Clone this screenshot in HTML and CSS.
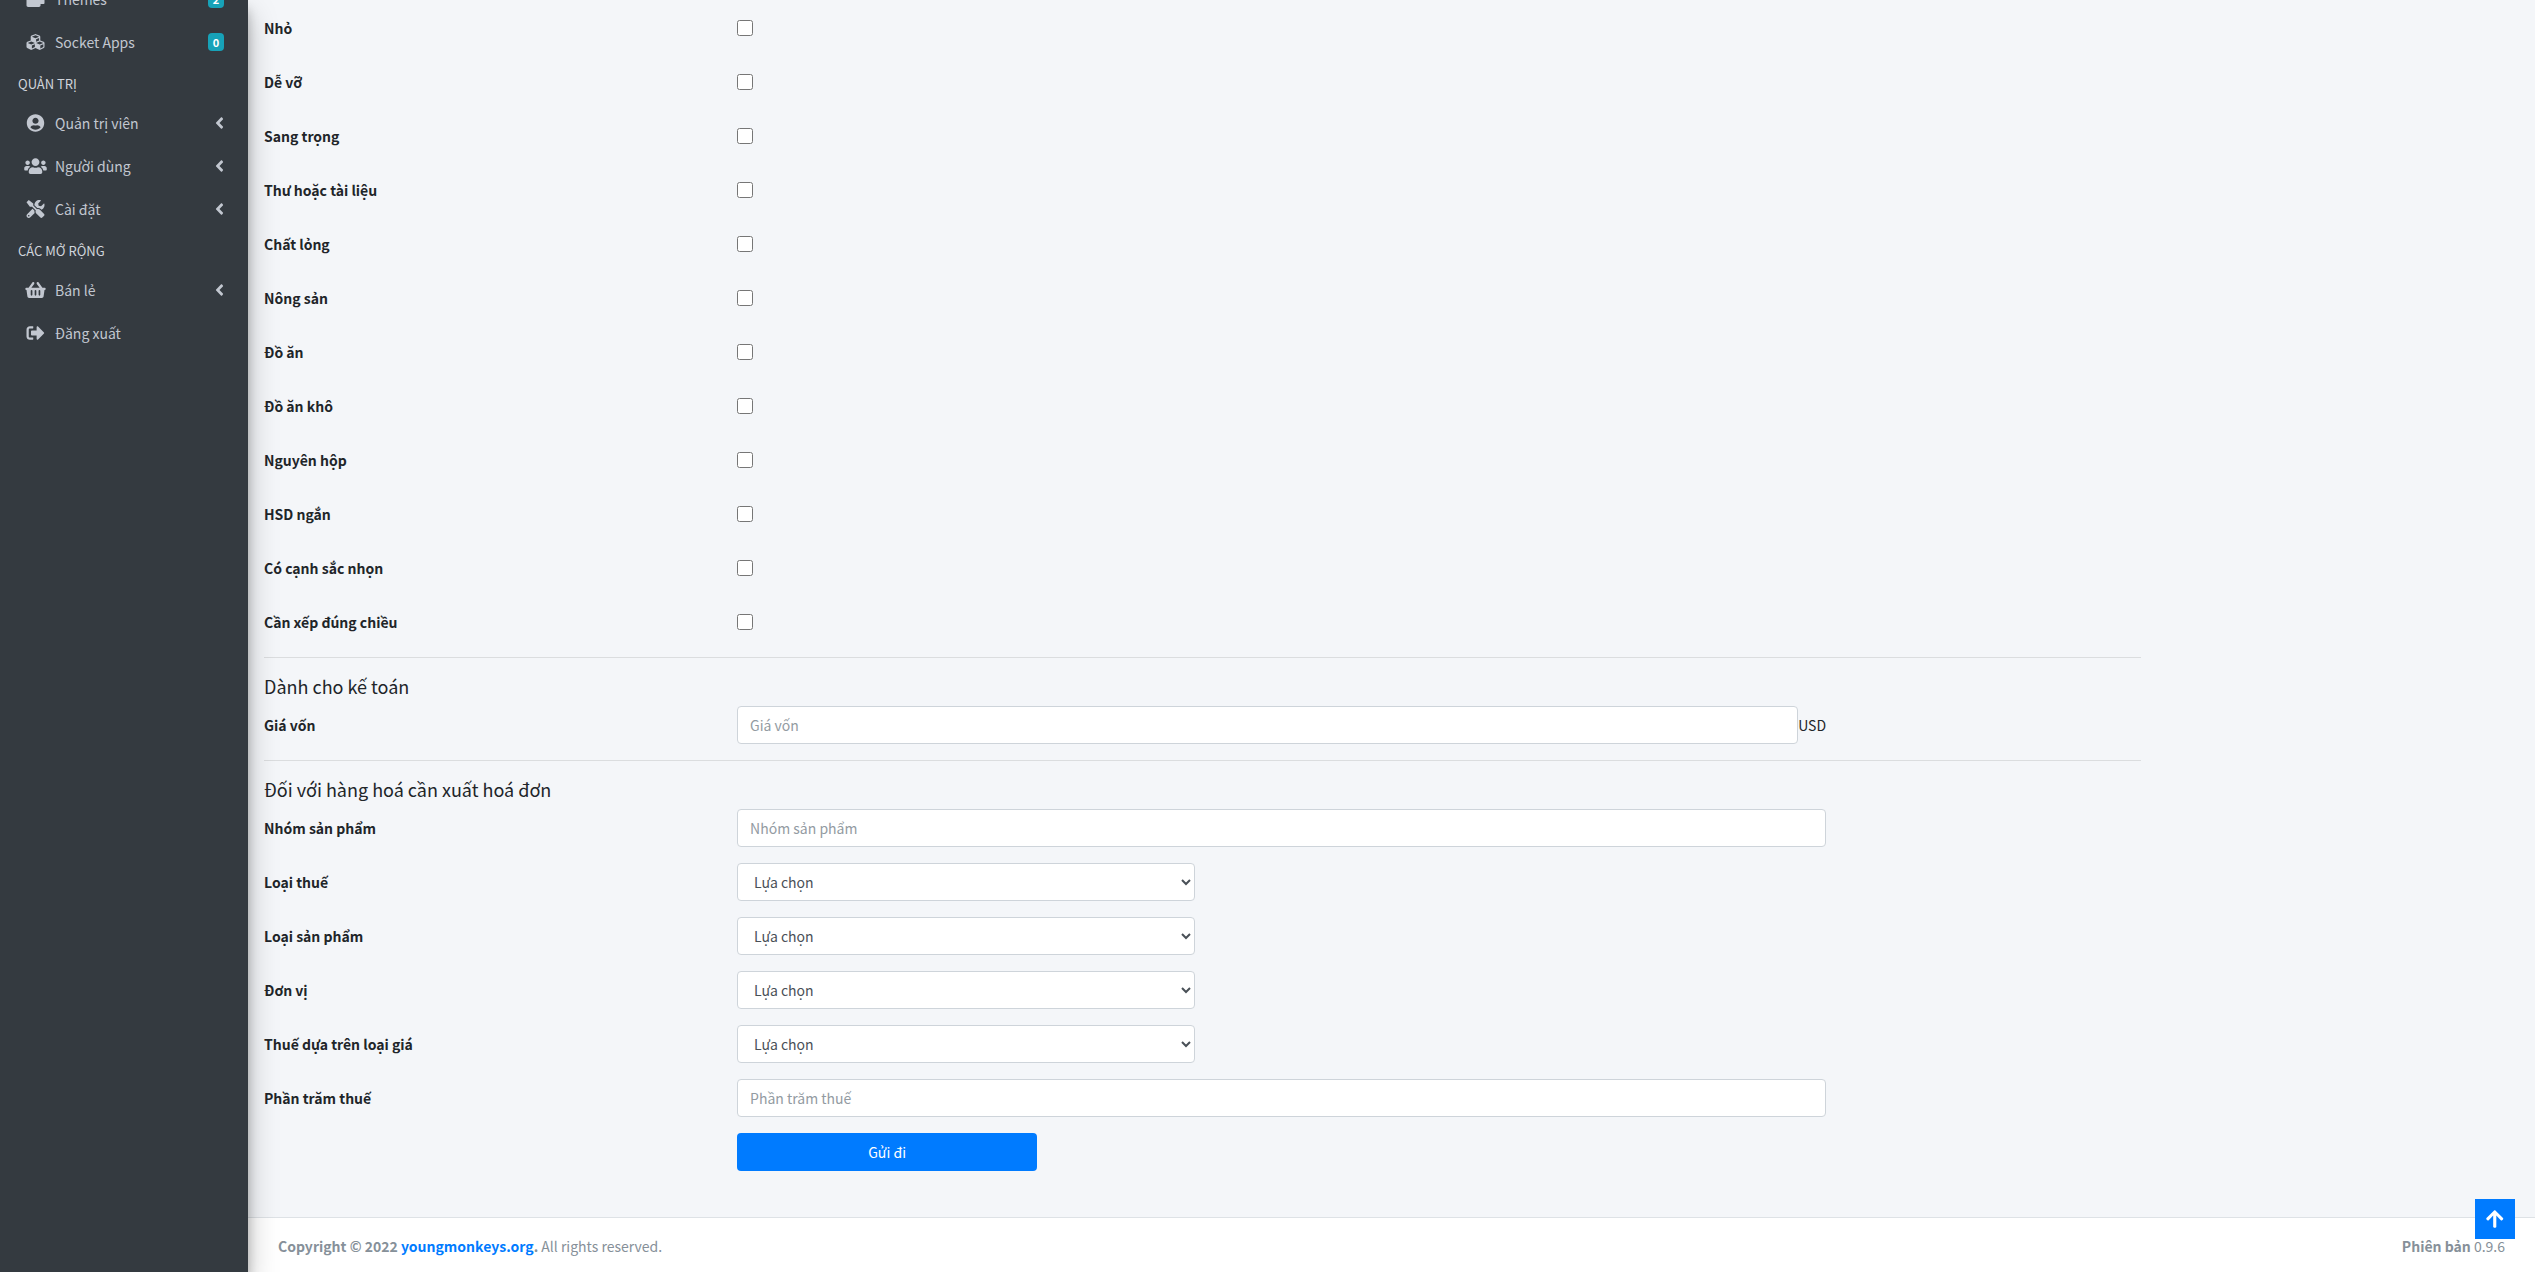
FILE: index.html
```
<!DOCTYPE html>
<html lang="vi">
<head>
    <meta charset="UTF-8">
    <meta name="viewport" content="width=device-width, initial-scale=1.0">
    <title>Quản trị</title>
    <link rel="stylesheet" href="styles.css">
</head>
<body>
<div class="wrapper">
    <!-- Sidebar -->
    <aside class="main-sidebar">
        <nav class="sidebar-nav">
            <a href="#" class="nav-link">
                <svg class="nav-icon" viewBox="0 0 512 512"><path d="M0 96c0-26 21-48 48-48h352v64h112v256c0 18-14 32-32 32h-80v32c0 26-21 48-48 48H48c-27 0-48-22-48-48z"/></svg>
                <span class="nav-text">Themes</span>
                <span class="badge">2</span>
            </a>
            <a href="#" class="nav-link">
                <svg class="nav-icon" viewBox="0 0 512 512"><path d="M488.6 250.2L392 214V105.5c0-15-9.3-28.4-23.4-33.7l-100-37.5c-8.1-3.1-17.1-3.1-25.3 0l-100 37.5c-14.1 5.3-23.4 18.7-23.4 33.7V214l-96.6 36.2C9.3 255.5 0 268.9 0 283.9V394c0 13.6 7.7 26.1 19.9 32.2l100 50c10.1 5.1 22.1 5.1 32.2 0l103.9-52 103.9 52c10.1 5.1 22.1 5.1 32.2 0l100-50c12.2-6.1 19.9-18.6 19.9-32.2V283.9c0-15-9.3-28.4-23.4-33.7zM358 214.8l-85 31.9v-68.2l85-37v73.3zM154 104.1l102-38.2 102 38.2v.6l-102 41.4-102-41.4v-.6zm84 291.1l-85 42.5v-79.1l85-38.8v75.4zm0-112l-102 41.4-102-41.4v-.6l102-38.2 102 38.2v.6zm240 112l-85 42.5v-79.1l85-38.8v75.4zm0-112l-102 41.4-102-41.4v-.6l102-38.2 102 38.2v.6z"/></svg>
                <span class="nav-text">Socket Apps</span>
                <span class="badge">0</span>
            </a>
            <div class="nav-header">QUẢN TRỊ</div>
            <a href="#" class="nav-link">
                <svg class="nav-icon" viewBox="0 0 496 512"><path d="M248 8C111 8 0 119 0 256s111 248 248 248 248-111 248-248S385 8 248 8zm0 96c48.6 0 88 39.4 88 88s-39.4 88-88 88-88-39.4-88-88 39.4-88 88-88zm0 344c-58.7 0-111.3-26.6-146.5-68.2 18.8-35.4 55.6-59.8 98.5-59.8 2.4 0 4.8.4 7.1 1.1 13 4.2 26.6 6.9 40.9 6.9 14.3 0 28-2.7 40.9-6.9 2.3-.7 4.7-1.1 7.1-1.1 42.9 0 79.7 24.4 98.5 59.8C359.3 421.4 306.7 448 248 448z"/></svg>
                <span class="nav-text">Quản trị viên</span>
                <svg class="nav-arrow" viewBox="0 0 256 512"><path d="M31.7 239l136-136c9.4-9.4 24.6-9.4 33.9 0l22.6 22.6c9.4 9.4 9.4 24.6 0 33.9L127.9 256l96.4 96.4c9.4 9.4 9.4 24.6 0 33.9L201.7 409c-9.4 9.4-24.6 9.4-33.9 0l-136-136c-9.5-9.4-9.5-24.6-.1-34z"/></svg>
            </a>
            <a href="#" class="nav-link">
                <svg class="nav-icon" viewBox="0 0 640 512"><path d="M96 224c35.3 0 64-28.7 64-64s-28.7-64-64-64-64 28.7-64 64 28.7 64 64 64zm448 0c35.3 0 64-28.7 64-64s-28.7-64-64-64-64 28.7-64 64 28.7 64 64 64zm32 32h-64c-17.6 0-33.5 7.1-45.1 18.6 40.3 22.1 68.9 62 75.1 109.4h66c17.7 0 32-14.3 32-32v-32c0-35.3-28.7-64-64-64zm-256 0c61.9 0 112-50.1 112-112S381.9 32 320 32 208 82.1 208 144s50.1 112 112 112zm76.8 32h-8.3c-20.8 10-43.9 16-68.5 16s-47.6-6-68.5-16h-8.3C179.6 288 128 339.6 128 403.2V432c0 26.5 21.5 48 48 48h288c26.5 0 48-21.5 48-48v-28.8c0-63.6-51.6-115.2-115.2-115.2zm-223.7-13.4C161.5 263.1 145.6 256 128 256H64c-35.3 0-64 28.7-64 64v32c0 17.7 14.3 32 32 32h65.9c6.3-47.4 34.9-87.3 75.2-109.4z"/></svg>
                <span class="nav-text">Người dùng</span>
                <svg class="nav-arrow" viewBox="0 0 256 512"><path d="M31.7 239l136-136c9.4-9.4 24.6-9.4 33.9 0l22.6 22.6c9.4 9.4 9.4 24.6 0 33.9L127.9 256l96.4 96.4c9.4 9.4 9.4 24.6 0 33.9L201.7 409c-9.4 9.4-24.6 9.4-33.9 0l-136-136c-9.5-9.4-9.5-24.6-.1-34z"/></svg>
            </a>
            <a href="#" class="nav-link">
                <svg class="nav-icon" viewBox="0 0 512 512"><path d="M501.1 395.7L384 278.6c-23.1-23.1-57.6-27.6-85.4-13.9L192 158.1V96L64 0 0 64l96 128h62.1l106.6 106.6c-13.6 27.8-9.2 62.3 13.9 85.4l117.1 117.1c14.6 14.6 38.2 14.6 52.7 0l52.7-52.7c14.5-14.6 14.5-38.2 0-52.7zM331.7 225c28.3 0 54.9 11 74.9 31l19.4 19.4c15.8-6.9 30.8-16.5 43.8-29.5 37.1-37.1 49.7-89.3 37.9-136.7-2.2-9-13.5-12.1-20.1-5.5l-74.4 74.4-67.9-11.3L334 98.9l74.4-74.4c6.6-6.6 3.4-17.9-5.7-20.2-47.4-11.7-99.6.9-136.6 37.9-28.5 28.5-41.9 66.1-41.2 103.6l82.1 82.1c8.1-1.9 16.5-2.9 24.7-2.9zm-103.9 82l-56.7-56.7L18.7 402.8c-25 25-25 65.5 0 90.5s65.5 25 90.5 0l123.6-123.6c-7.6-19.9-9.9-41.6-5-62.7zM64 472c-13.2 0-24-10.8-24-24 0-13.3 10.7-24 24-24s24 10.7 24 24c0 13.2-10.7 24-24 24z"/></svg>
                <span class="nav-text">Cài đặt</span>
                <svg class="nav-arrow" viewBox="0 0 256 512"><path d="M31.7 239l136-136c9.4-9.4 24.6-9.4 33.9 0l22.6 22.6c9.4 9.4 9.4 24.6 0 33.9L127.9 256l96.4 96.4c9.4 9.4 9.4 24.6 0 33.9L201.7 409c-9.4 9.4-24.6 9.4-33.9 0l-136-136c-9.5-9.4-9.5-24.6-.1-34z"/></svg>
            </a>
            <div class="nav-header">CÁC MỞ RỘNG</div>
            <a href="#" class="nav-link">
                <svg class="nav-icon" viewBox="0 0 576 512"><path d="M576 216v16c0 13.255-10.745 24-24 24h-8l-26.113 182.788C514.509 462.435 494.257 480 470.37 480H105.63c-23.887 0-44.139-17.565-47.518-41.212L32 256h-8c-13.255 0-24-10.745-24-24v-16c0-13.255 10.745-24 24-24h67.341l106.78-146.821c10.395-14.292 30.407-17.453 44.701-7.058 14.293 10.395 17.453 30.408 7.058 44.701L170.477 192h235.046L326.12 82.821c-10.395-14.292-7.234-34.306 7.059-44.701 14.291-10.395 34.306-7.235 44.701 7.058L484.659 192H552c13.255 0 24 10.745 24 24zM312 392V280c0-13.255-10.745-24-24-24s-24 10.745-24 24v112c0 13.255 10.745 24 24 24s24-10.745 24-24zm112 0V280c0-13.255-10.745-24-24-24s-24 10.745-24 24v112c0 13.255 10.745 24 24 24s24-10.745 24-24zm-224 0V280c0-13.255-10.745-24-24-24s-24 10.745-24 24v112c0 13.255 10.745 24 24 24s24-10.745 24-24z"/></svg>
                <span class="nav-text">Bán lẻ</span>
                <svg class="nav-arrow" viewBox="0 0 256 512"><path d="M31.7 239l136-136c9.4-9.4 24.6-9.4 33.9 0l22.6 22.6c9.4 9.4 9.4 24.6 0 33.9L127.9 256l96.4 96.4c9.4 9.4 9.4 24.6 0 33.9L201.7 409c-9.4 9.4-24.6 9.4-33.9 0l-136-136c-9.5-9.4-9.5-24.6-.1-34z"/></svg>
            </a>
            <a href="#" class="nav-link">
                <svg class="nav-icon" viewBox="0 0 512 512"><path d="M497 273L329 441c-15 15-41 4.5-41-17v-96H152c-13.3 0-24-10.7-24-24v-96c0-13.3 10.7-24 24-24h136V88c0-21.4 25.9-32 41-17l168 168c9.3 9.4 9.3 24.6 0 34zM192 436v-40c0-6.6-5.4-12-12-12H96c-17.7 0-32-14.3-32-32V160c0-17.7 14.3-32 32-32h84c6.6 0 12-5.4 12-12V76c0-6.6-5.4-12-12-12H96c-53 0-96 43-96 96v192c0 53 43 96 96 96h84c6.6 0 12-5.4 12-12z"/></svg>
                <span class="nav-text">Đăng xuất</span>
            </a>
        </nav>
    </aside>

    <div class="content-wrapper">
        <main class="content">
            <form class="product-form">
                <div class="form-group">
                    <label for="small">Nhỏ</label>
                    <input type="checkbox" id="small">
                </div>
                <div class="form-group">
                    <label for="fragile">Dễ vỡ</label>
                    <input type="checkbox" id="fragile">
                </div>
                <div class="form-group">
                    <label for="luxury">Sang trọng</label>
                    <input type="checkbox" id="luxury">
                </div>
                <div class="form-group">
                    <label for="document">Thư hoặc tài liệu</label>
                    <input type="checkbox" id="document">
                </div>
                <div class="form-group">
                    <label for="liquid">Chất lỏng</label>
                    <input type="checkbox" id="liquid">
                </div>
                <div class="form-group">
                    <label for="agricultural">Nông sản</label>
                    <input type="checkbox" id="agricultural">
                </div>
                <div class="form-group">
                    <label for="food">Đồ ăn</label>
                    <input type="checkbox" id="food">
                </div>
                <div class="form-group">
                    <label for="dryFood">Đồ ăn khô</label>
                    <input type="checkbox" id="dryFood">
                </div>
                <div class="form-group">
                    <label for="wholeBox">Nguyên hộp</label>
                    <input type="checkbox" id="wholeBox">
                </div>
                <div class="form-group">
                    <label for="shortExpiry">HSD ngắn</label>
                    <input type="checkbox" id="shortExpiry">
                </div>
                <div class="form-group">
                    <label for="sharpEdges">Có cạnh sắc nhọn</label>
                    <input type="checkbox" id="sharpEdges">
                </div>
                <div class="form-group">
                    <label for="upright">Cần xếp đúng chiều</label>
                    <input type="checkbox" id="upright">
                </div>

                <hr>
                <h5>Dành cho kế toán</h5>
                <div class="form-group">
                    <label for="costPrice">Giá vốn</label>
                    <div class="field field-unit">
                        <input type="text" class="form-control" id="costPrice" placeholder="Giá vốn">
                        <span>USD</span>
                    </div>
                </div>

                <hr>
                <h5>Đối với hàng hoá cần xuất hoá đơn</h5>
                <div class="form-group">
                    <label for="productGroup">Nhóm sản phẩm</label>
                    <div class="field">
                        <input type="text" class="form-control" id="productGroup" placeholder="Nhóm sản phẩm">
                    </div>
                </div>
                <div class="form-group">
                    <label for="taxType">Loại thuế</label>
                    <div class="field field-small">
                        <select class="form-control" id="taxType"><option>Lựa chọn</option></select>
                    </div>
                </div>
                <div class="form-group">
                    <label for="productType">Loại sản phẩm</label>
                    <div class="field field-small">
                        <select class="form-control" id="productType"><option>Lựa chọn</option></select>
                    </div>
                </div>
                <div class="form-group">
                    <label for="unit">Đơn vị</label>
                    <div class="field field-small">
                        <select class="form-control" id="unit"><option>Lựa chọn</option></select>
                    </div>
                </div>
                <div class="form-group">
                    <label for="taxBase">Thuế dựa trên loại giá</label>
                    <div class="field field-small">
                        <select class="form-control" id="taxBase"><option>Lựa chọn</option></select>
                    </div>
                </div>
                <div class="form-group">
                    <label for="taxPercent">Phần trăm thuế</label>
                    <div class="field">
                        <input type="text" class="form-control" id="taxPercent" placeholder="Phần trăm thuế">
                    </div>
                </div>
                <div class="form-group">
                    <button type="submit" class="btn-submit">Gửi đi</button>
                </div>
            </form>
        </main>

        <footer class="main-footer">
            <div><strong>Copyright © 2022 <a href="#">youngmonkeys.org</a>.</strong> All rights reserved.</div>
            <div><b>Phiên bản</b> 0.9.6</div>
        </footer>
    </div>
</div>

<button type="button" class="back-to-top" aria-label="Scroll to top">
    <svg viewBox="0 0 448 512"><path d="M34.9 289.5l-22.2-22.2c-9.4-9.4-9.4-24.6 0-33.9L207 39c9.4-9.4 24.6-9.4 33.9 0l194.3 194.3c9.4 9.4 9.4 24.6 0 33.9L413 289.4c-9.5 9.5-25 9.3-34.3-.4L264 168.6V456c0 13.3-10.7 24-24 24h-32c-13.3 0-24-10.7-24-24V168.6L69.2 289.1c-9.3 9.8-24.8 10-34.3.4z"/></svg>
</button>
</body>
</html>
```
FILE: styles.css
```
* {
    box-sizing: border-box;
}

body {
    margin: 0;
    font-family: "Noto Sans CJK SC", "Noto Sans", sans-serif;
    font-size: 14px;
    line-height: 24px;
    color: #212529;
    background: #f4f6f9;
}

a {
    color: #007bff;
    text-decoration: none;
}

.wrapper {
    display: flex;
    min-height: 100vh;
}

/* Sidebar */
.main-sidebar {
    flex: 0 0 248px;
    padding: 0 8px;
    overflow: hidden;
    background: #343a40;
    box-shadow: 0 14px 28px rgba(0, 0, 0, .25), 0 10px 10px rgba(0, 0, 0, .22);
    z-index: 1;
}

/* the menu is scrolled past its first entries */
.sidebar-nav {
    margin-top: -21px;
}

.nav-link {
    display: flex;
    align-items: center;
    height: 40px;
    margin-bottom: 3px;
    padding: 0 16px;
    color: #c2c7d0;
}

.nav-icon {
    width: 23px;
    height: 18px;
    margin-right: 8px;
    fill: currentColor;
}

.nav-text {
    flex: 1;
}

.nav-arrow {
    width: 9px;
    height: 18px;
    fill: currentColor;
}

.nav-header {
    height: 38px;
    padding: 7px 10px;
    font-size: 13px;
    color: #d0d4db;
}

.badge {
    min-width: 16px;
    height: 18px;
    border-radius: 4px;
    font-size: 11px;
    font-weight: bold;
    line-height: 18px;
    text-align: center;
    color: #fff;
    background: #17a2b8;
}

/* Form */
.content-wrapper {
    flex: 1;
    display: flex;
    flex-direction: column;
    min-width: 0;
}

.content {
    flex: 1;
    padding: 9px 0 0 16px;
}

.product-form {
    width: calc(83.333% - 15px);
}

.form-group {
    display: grid;
    grid-template-columns: 3fr 9fr;
    align-items: center;
    width: calc(100% + 15px);
    min-height: 38px;
    margin-bottom: 16px;
}

.form-group label {
    font-weight: bold;
}

.form-group input[type="checkbox"] {
    width: 16px;
    height: 16px;
    margin: 0;
}

.field {
    width: calc(77.778% - 15px);
}

.field-small {
    width: calc(33.333% - 15px);
}

.field-unit {
    display: flex;
    align-items: center;
}

.form-control {
    display: block;
    width: 100%;
    height: 38px;
    padding: 6px 12px;
    border: 1px solid #ced4da;
    border-radius: 4px;
    font: inherit;
    color: #495057;
    background: #fff;
}

.form-control::placeholder {
    color: #939ba2;
}

hr {
    margin: 0 0 16px;
    border: 0;
    border-top: 1px solid rgba(0, 0, 0, .1);
}

h5 {
    margin: 0 0 8px;
    font-size: 18px;
    font-weight: normal;
    line-height: 24px;
}

.btn-submit {
    grid-column: 2;
    width: 300px;
    height: 38px;
    border: 0;
    border-radius: 4px;
    font: inherit;
    color: #fff;
    background: #007bff;
}

/* Footer */
.main-footer {
    display: flex;
    justify-content: space-between;
    padding: 16px 30px 14px;
    border-top: 1px solid #dee2e6;
    color: #869099;
    background: #fff;
}

.back-to-top {
    position: fixed;
    right: 20px;
    bottom: 33px;
    display: flex;
    align-items: center;
    justify-content: center;
    width: 40px;
    height: 40px;
    padding: 0;
    border: 0;
    background: #007bff;
}

.back-to-top svg {
    height: 20px;
    fill: #fff;
}
```
